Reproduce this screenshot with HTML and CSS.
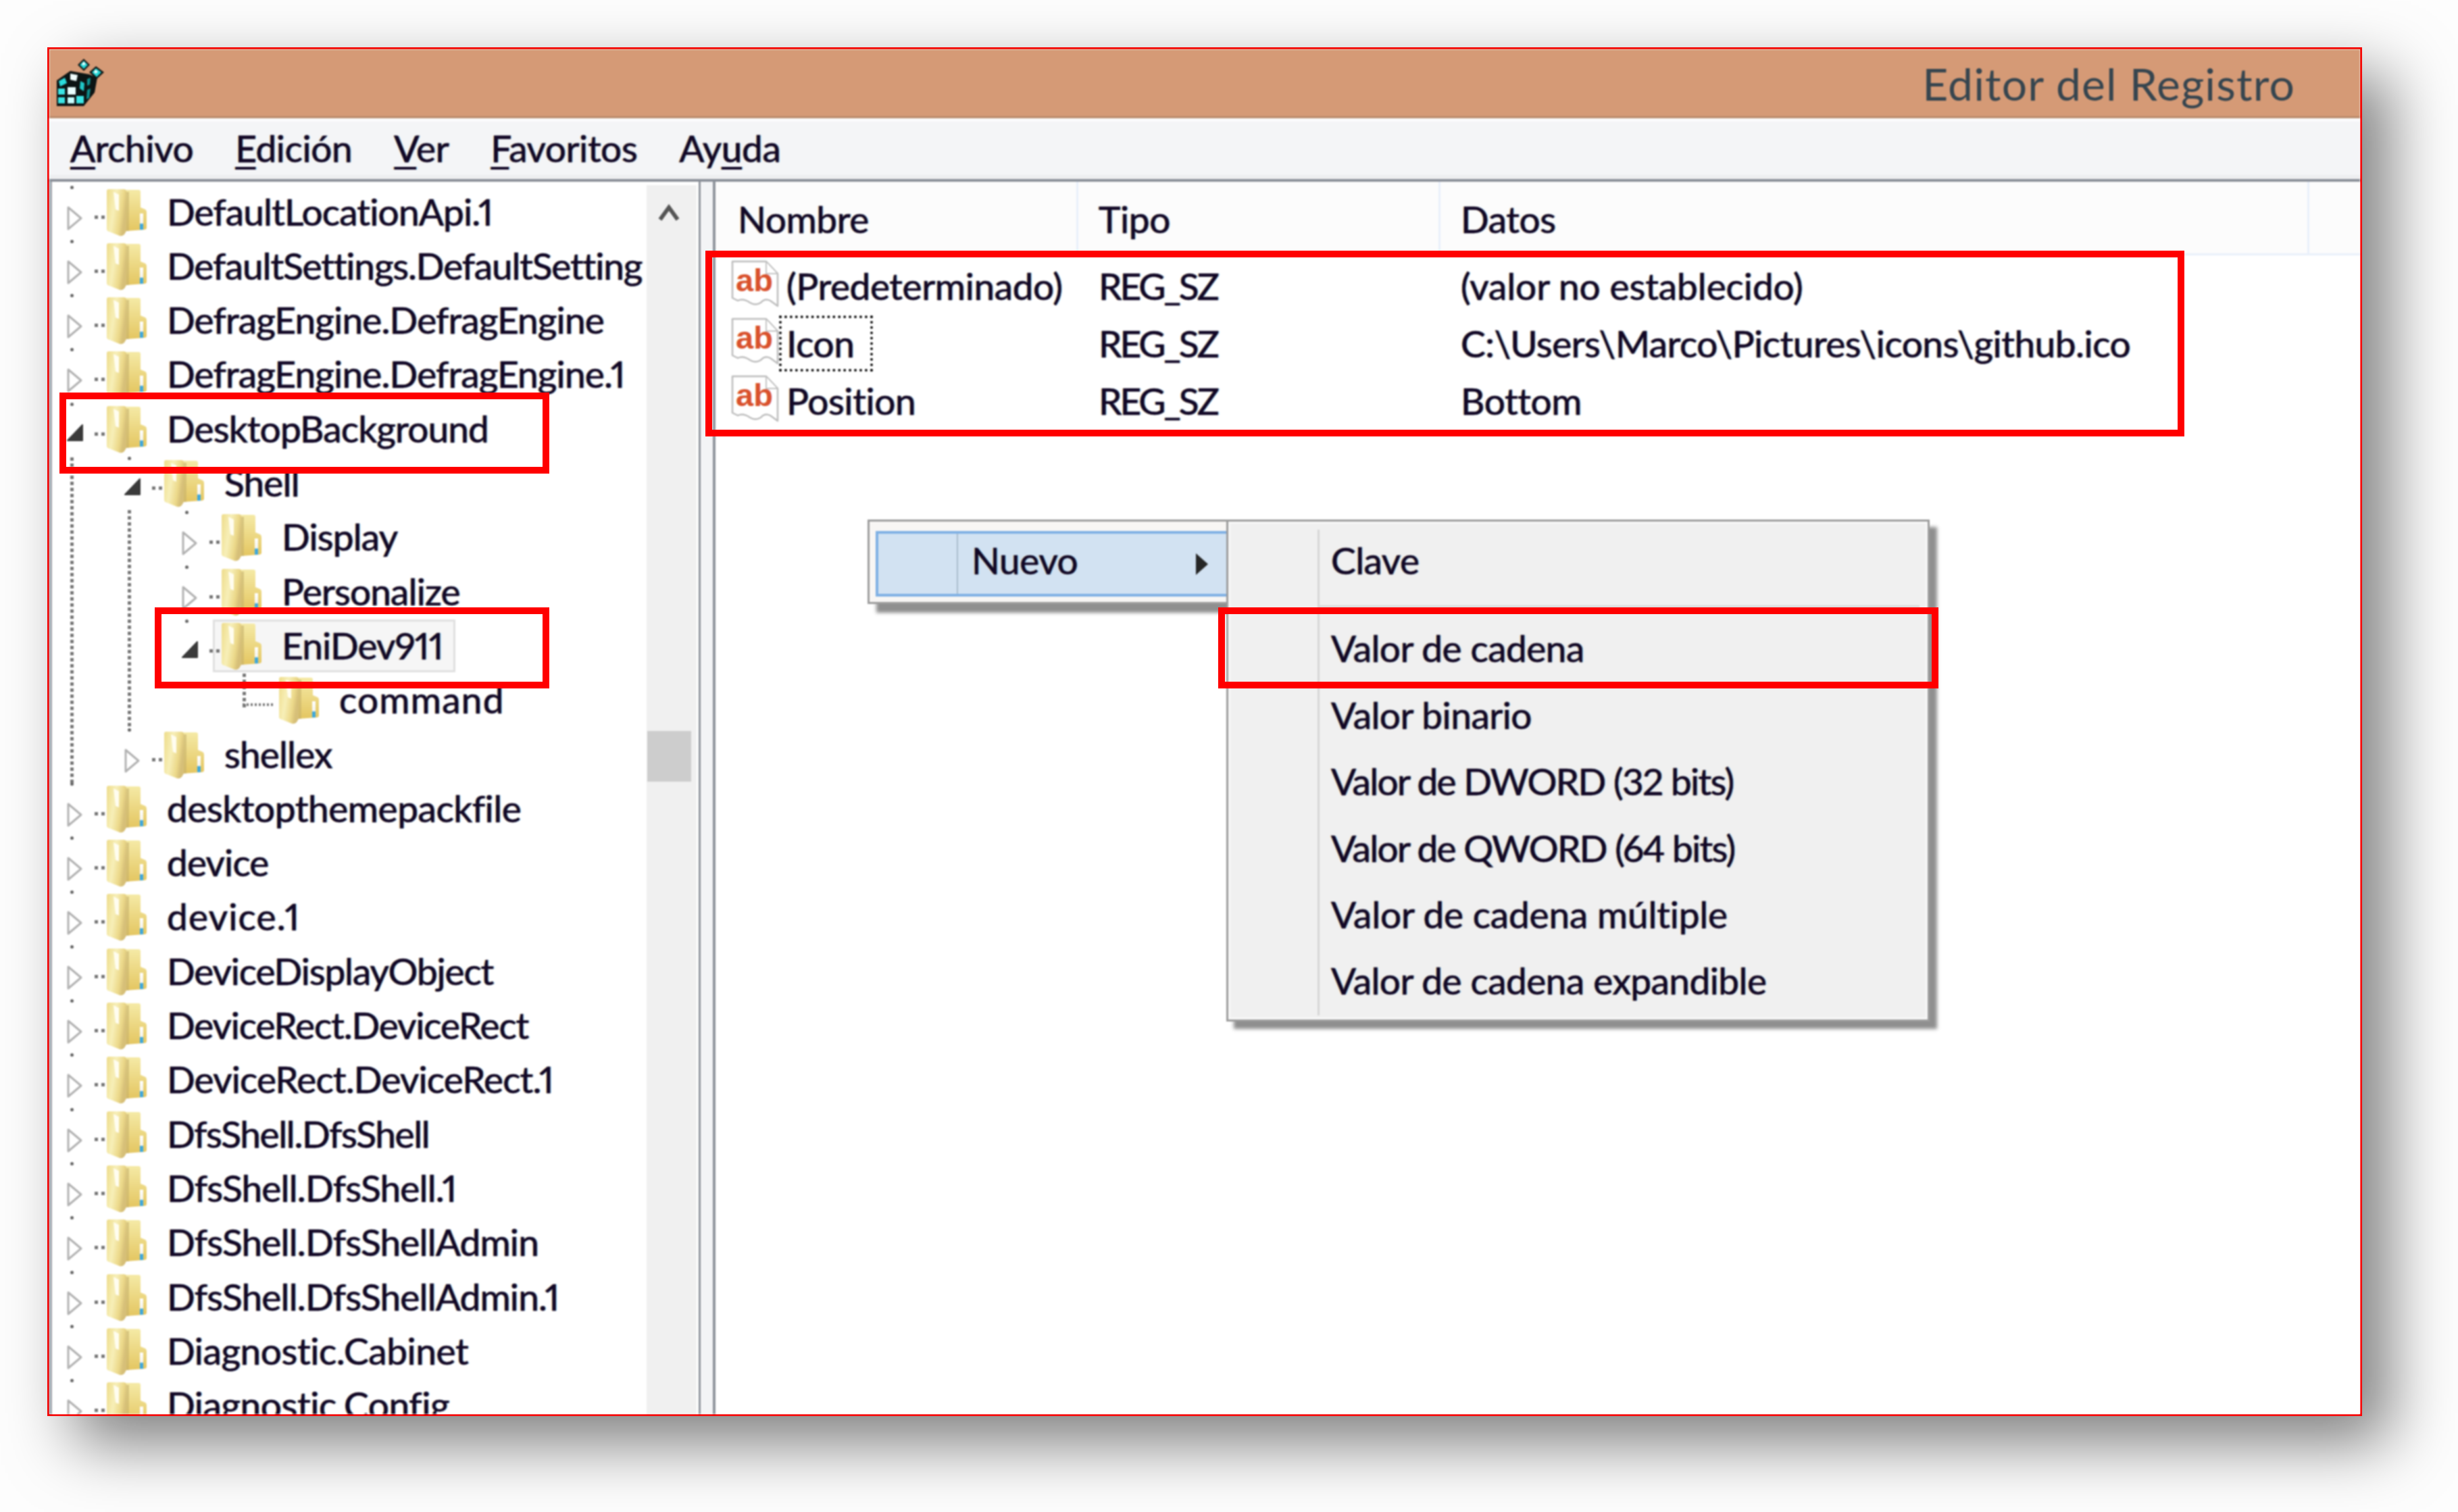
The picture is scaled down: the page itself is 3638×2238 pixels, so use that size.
FILE: index.html
```html
<!DOCTYPE html>
<html lang="es">
<head>
<meta charset="utf-8">
<title>Editor del Registro</title>
<link rel="stylesheet" href="styles.css">
</head>
<body>
<svg class="defs" aria-hidden="true">
  <defs>
    <linearGradient id="fb" x1="0" y1="0" x2="0" y2="1"><stop offset="0" stop-color="#f5eaa6"/><stop offset="1" stop-color="#e4c661"/></linearGradient>
    <linearGradient id="ff" x1="0" y1="0" x2="1" y2="0.35"><stop offset="0" stop-color="#eedc8a"/><stop offset=".45" stop-color="#f7efb8"/><stop offset=".8" stop-color="#ecd98a"/><stop offset="1" stop-color="#d6bf78"/></linearGradient>
    <linearGradient id="fbar" x1="0" y1="0" x2="0" y2="1"><stop offset="0" stop-color="#fff"/><stop offset=".6" stop-color="#f4f4ee"/><stop offset=".65" stop-color="#3fa8dc"/><stop offset="1" stop-color="#3fa8dc"/></linearGradient>
    <symbol id="folder" viewBox="0 0 59 70">
      <path d="M24 1H47Q50 1 50 4V27L57 30Q59 31 59 34V57Q59 60 55 60L28 62Z" fill="url(#fb)"/>
      <path d="M29 4H33V62H28Z" fill="#c6b06a" opacity=".6"/>
      <path d="M3 0H25Q29 0 29 4V62L26 67Q23 70 19 69L4 63Q0 62 0 59V3Q0 0 3 0Z" fill="url(#ff)"/>
      <path d="M10 4L18 8V32L13 30Z" fill="#fffdf0"/>
      <rect x="49" y="36" width="5" height="24" fill="url(#fbar)"/>
    </symbol>
    <symbol id="closed" viewBox="0 0 26 38"><path d="M3 3L22 19L3 35Z" fill="#fff" stroke="#b2b2b2" stroke-width="3" stroke-linejoin="round"/></symbol>
    <symbol id="open" viewBox="0 0 26 38"><path d="M24 4V27H2Z" fill="#3a3a3a" stroke="#3a3a3a" stroke-width="2" stroke-linejoin="round"/></symbol>
    <symbol id="ab" viewBox="0 0 71 72">
      <path d="M2 2H52L69 20V68L58 60Q50 56 44 63Q36 68 28 63Q18 56 10 60L2 56Z" fill="#fff" stroke="#bdbdbd" stroke-width="2.5" stroke-linejoin="round"/>
      <path d="M52 3V20H68" fill="#fff" stroke="#c4c4c4" stroke-width="2"/>
    </symbol>
  </defs>
</svg>

<main class="window">
  <div class="content">
    <header class="titlebar">
      <svg class="regicon" viewBox="0 0 72 71" aria-hidden="true">
        <path d="M2 32L22 18L50 23L62 28L58 50L42 70H2Z" fill="#0c1414"/>
        <path d="M42 0L51 9L42 18L33 9Z" fill="#0c1414"/><path d="M42 3L48 9L42 15L36 9Z" fill="#23d6d6"/><path d="M42 4L45 8L41 10L39 8Z" fill="#e9ffff"/>
        <path d="M60 11L72 20L61 30L50 20Z" fill="#0c1414"/><path d="M60 14L68 20L61 27L54 20Z" fill="#23d6d6"/><path d="M59 16L63 19L60 22L57 20Z" fill="#e9ffff"/>
        <path d="M5 33L14 28L17 36L7 41Z" fill="#2bdcdc"/><path d="M22 22L33 24L31 33L22 31Z" fill="#f2ffff"/>
        <path d="M37 33L43 36L42 48L36 44Z" fill="#20c8c8"/><path d="M47 30L52 28L51 38L47 40Z" fill="#0e8f8f"/><path d="M47 46L52 44L50 58L46 60Z" fill="#0e8f8f"/>
        <rect x="4" y="44" width="10" height="9" fill="#3be4e4"/><rect x="18" y="42" width="12" height="11" fill="#eaffff"/>
        <rect x="4" y="57" width="10" height="9" fill="#3be4e4"/><rect x="18" y="57" width="10" height="9" fill="#c8ffff"/><rect x="31" y="55" width="11" height="11" fill="#3be4e4"/>
      </svg>
      <h1 class="title">Editor del Registro</h1>
    </header>
    <nav class="menubar">
      <span><u>A</u>rchivo</span>
      <span><u>E</u>dición</span>
      <span><u>V</u>er</span>
      <span><u>F</u>avoritos</span>
      <span>Ay<u>u</u>da</span>
    </nav>
    <div class="panes">
      <section class="tree">
        <div class="rows">
          <i class="vline v-root"></i>
          <i class="vline v-shell"></i>
          <i class="vline v-eni"></i>
          <i class="hline"></i>
          <div class="row l0"><svg class="caret"><use href="#closed"/></svg><i class="dots"></i><div class="node"><svg class="folder"><use href="#folder"/></svg><span class="label">DefaultLocationApi.1</span></div></div>
          <div class="row l0"><svg class="caret"><use href="#closed"/></svg><i class="dots"></i><div class="node"><svg class="folder"><use href="#folder"/></svg><span class="label tight">DefaultSettings.DefaultSetting</span></div></div>
          <div class="row l0"><svg class="caret"><use href="#closed"/></svg><i class="dots"></i><div class="node"><svg class="folder"><use href="#folder"/></svg><span class="label">DefragEngine.DefragEngine</span></div></div>
          <div class="row l0"><svg class="caret"><use href="#closed"/></svg><i class="dots"></i><div class="node"><svg class="folder"><use href="#folder"/></svg><span class="label">DefragEngine.DefragEngine.1</span></div></div>
          <div class="row l0"><svg class="caret"><use href="#open"/></svg><i class="dots"></i><div class="node"><svg class="folder"><use href="#folder"/></svg><span class="label">DesktopBackground</span></div></div>
          <div class="row l1"><svg class="caret"><use href="#open"/></svg><i class="dots"></i><div class="node"><svg class="folder"><use href="#folder"/></svg><span class="label">Shell</span></div></div>
          <div class="row l2"><svg class="caret"><use href="#closed"/></svg><i class="dots"></i><div class="node"><svg class="folder"><use href="#folder"/></svg><span class="label">Display</span></div></div>
          <div class="row l2"><svg class="caret"><use href="#closed"/></svg><i class="dots"></i><div class="node"><svg class="folder"><use href="#folder"/></svg><span class="label">Personalize</span></div></div>
          <div class="row l2"><svg class="caret"><use href="#open"/></svg><i class="dots"></i><div class="node selected"><svg class="folder"><use href="#folder"/></svg><span class="label">EniDev911</span></div></div>
          <div class="row l3 leaf"><i class="caret"></i><i class="dots blank"></i><div class="node"><svg class="folder"><use href="#folder"/></svg><span class="label wide">command</span></div></div>
          <div class="row l1"><svg class="caret"><use href="#closed"/></svg><i class="dots"></i><div class="node"><svg class="folder"><use href="#folder"/></svg><span class="label">shellex</span></div></div>
          <div class="row l0"><svg class="caret"><use href="#closed"/></svg><i class="dots"></i><div class="node"><svg class="folder"><use href="#folder"/></svg><span class="label loose">desktopthemepackfile</span></div></div>
          <div class="row l0"><svg class="caret"><use href="#closed"/></svg><i class="dots"></i><div class="node"><svg class="folder"><use href="#folder"/></svg><span class="label">device</span></div></div>
          <div class="row l0"><svg class="caret"><use href="#closed"/></svg><i class="dots"></i><div class="node"><svg class="folder"><use href="#folder"/></svg><span class="label wide">device.1</span></div></div>
          <div class="row l0"><svg class="caret"><use href="#closed"/></svg><i class="dots"></i><div class="node"><svg class="folder"><use href="#folder"/></svg><span class="label tight">DeviceDisplayObject</span></div></div>
          <div class="row l0"><svg class="caret"><use href="#closed"/></svg><i class="dots"></i><div class="node"><svg class="folder"><use href="#folder"/></svg><span class="label tight">DeviceRect.DeviceRect</span></div></div>
          <div class="row l0"><svg class="caret"><use href="#closed"/></svg><i class="dots"></i><div class="node"><svg class="folder"><use href="#folder"/></svg><span class="label">DeviceRect.DeviceRect.1</span></div></div>
          <div class="row l0"><svg class="caret"><use href="#closed"/></svg><i class="dots"></i><div class="node"><svg class="folder"><use href="#folder"/></svg><span class="label tighter">DfsShell.DfsShell</span></div></div>
          <div class="row l0"><svg class="caret"><use href="#closed"/></svg><i class="dots"></i><div class="node"><svg class="folder"><use href="#folder"/></svg><span class="label">DfsShell.DfsShell.1</span></div></div>
          <div class="row l0"><svg class="caret"><use href="#closed"/></svg><i class="dots"></i><div class="node"><svg class="folder"><use href="#folder"/></svg><span class="label">DfsShell.DfsShellAdmin</span></div></div>
          <div class="row l0"><svg class="caret"><use href="#closed"/></svg><i class="dots"></i><div class="node"><svg class="folder"><use href="#folder"/></svg><span class="label">DfsShell.DfsShellAdmin.1</span></div></div>
          <div class="row l0"><svg class="caret"><use href="#closed"/></svg><i class="dots"></i><div class="node"><svg class="folder"><use href="#folder"/></svg><span class="label loose">Diagnostic.Cabinet</span></div></div>
          <div class="row l0"><svg class="caret"><use href="#closed"/></svg><i class="dots"></i><div class="node"><svg class="folder"><use href="#folder"/></svg><span class="label loose">Diagnostic.Config</span></div></div>
        </div>
        <div class="scrollbar">
          <svg class="chev" viewBox="0 0 32 27" aria-hidden="true"><path d="M3 24L16 6L29 24" fill="none" stroke="#555" stroke-width="6"/></svg>
          <div class="thumb"></div>
        </div>
      </section>
      <div class="splitter"></div>
      <section class="list">
        <div class="head">
          <div class="hcell c-name">Nombre</div>
          <div class="hcell c-type">Tipo</div>
          <div class="hcell c-data">Datos</div>
        </div>
        <div class="lrow">
          <div class="c-name namecell"><span class="abicon"><svg class="abpage"><use href="#ab"/></svg><b class="abtext">ab</b></span><span class="vname">(Predeterminado)</span></div>
          <div class="c-type">REG_SZ</div>
          <div class="c-data relaxed">(valor no establecido)</div>
        </div>
        <div class="lrow">
          <div class="c-name namecell"><span class="abicon"><svg class="abpage"><use href="#ab"/></svg><b class="abtext">ab</b></span><span class="vname focus">Icon</span></div>
          <div class="c-type">REG_SZ</div>
          <div class="c-data condensed">C:\Users\Marco\Pictures\icons\github.ico</div>
        </div>
        <div class="lrow">
          <div class="c-name namecell"><span class="abicon"><svg class="abpage"><use href="#ab"/></svg><b class="abtext">ab</b></span><span class="vname">Position</span></div>
          <div class="c-type">REG_SZ</div>
          <div class="c-data">Bottom</div>
        </div>
      </section>
    </div>
    <div class="popup">
      <div class="hover">
        <span class="pgutter"></span>
        <span class="ptext">Nuevo</span>
        <svg class="arrow" viewBox="0 0 19 32" aria-hidden="true"><path d="M1 0L19 16L1 32Z" fill="#262626"/></svg>
      </div>
    </div>
    <div class="submenu">
      <div class="item">Clave</div>
      <div class="msep"></div>
      <div class="item">Valor de cadena</div>
      <div class="item">Valor binario</div>
      <div class="item caps">Valor de DWORD (32 bits)</div>
      <div class="item caps">Valor de QWORD (64 bits)</div>
      <div class="item open-text">Valor de cadena múltiple</div>
      <div class="item">Valor de cadena expandible</div>
    </div>
  </div>
  <i class="mark mark-desktop"></i>
  <i class="mark mark-eni"></i>
  <i class="mark mark-values"></i>
  <i class="mark mark-cadena"></i>
</main>
</body>
</html>
```
FILE: styles.css
```css
* { box-sizing: border-box; }
html, body { margin: 0; height: 100%; }
body {
  background: #fdfdfd;
  padding: 70px 0 0 70px;
  overflow: hidden;
  font-family: "Lato", "Open Sans", sans-serif;
  font-size: 55px;
  font-variant-numeric: proportional-nums;
  color: #120726;
  -webkit-text-stroke: .5px #120726;
  text-shadow: -1.5px 0 1px rgba(255, 170, 40, .5), 1.5px 0 1px rgba(30, 170, 255, .5);
}
.defs { position: absolute; width: 0; height: 0; }

.window {
  position: relative;
  width: 3426px;
  height: 2026px;
  border: 3px solid #f70000;
  background: #fff;
  box-shadow: 40px 40px 90px rgba(0, 0, 0, .5);
}
.content {
  position: relative;
  height: 100%;
  display: flex;
  flex-direction: column;
  overflow: hidden;
  filter: blur(.9px);
}

.titlebar {
  flex: none;
  height: 102px;
  display: flex;
  align-items: flex-start;
  justify-content: space-between;
  background: #d59a76;
  border-bottom: 3px solid #b98a6a;
  padding: 14px 96px 0 9px;
}
.regicon { width: 72px; height: 71px; flex: none; }
.title {
  margin: -2px 0 0;
  font-size: 66px;
  font-weight: 400;
  line-height: 78px;
  letter-spacing: 1.1px;
  color: #36454f;
  -webkit-text-stroke: 0;
  text-shadow: none;
}

.menubar {
  flex: none;
  height: 90px;
  display: flex;
  gap: 62px;
  padding: 4px 0 0 31px;
  line-height: 70px;
  letter-spacing: -.4px;
  background: #f4f5f7;
  border-top: 5px solid #fbfbfc;
  border-bottom: 6px solid #eeeff0;
}
.menubar u { text-decoration-thickness: 4px; text-underline-offset: 7px; }

.panes {
  flex: 1;
  min-height: 0;
  display: flex;
  border-top: 4px solid #8b9099;
}

.tree {
  flex: none;
  width: 964px;
  display: flex;
  background: #fff;
  border-left: 4px solid #a3a8b0;
  border-right: 3px solid #8f949c;
}
.rows {
  position: relative;
  flex: 1;
  min-width: 0;
  padding-top: 5.6px;
  overflow: hidden;
  letter-spacing: -.85px;
}
.row {
  position: relative;
  height: 80.3px;
  display: flex;
  align-items: flex-start;
  white-space: nowrap;
}
.row::before {
  content: "";
  position: absolute;
  top: 0;
  width: 5px;
  height: 5px;
  border-radius: 50%;
  background: #666;
}
.leaf::before { display: none; }
.l0 { padding-left: 21px; }
.l1 { padding-left: 106px; }
.l2 { padding-left: 191px; }
.l3 { padding-left: 276px; }
.l0::before { left: 27px; }
.l1::before { left: 112px; }
.l2::before { left: 197px; }
.caret {
  flex: none;
  display: block;
  width: 26px;
  height: 38px;
  margin-top: 29px;
}
.dots {
  flex: none;
  position: relative;
  z-index: 1;
  width: 15px;
  height: 5px;
  margin: 44px 3px 0 16px;
  background: repeating-linear-gradient(90deg, #777 0 5px, transparent 5px 10px);
}
.dots.blank { background: none; }
.node {
  display: flex;
  align-items: flex-start;
  height: 78px;
}
.folder {
  flex: none;
  display: block;
  width: 59px;
  height: 70px;
  margin: 5px 30px 0 0;
}
.label { line-height: 70px; margin-top: 3px; }
.label.tight { letter-spacing: -1.15px; }
.label.tighter { letter-spacing: -1.4px; }
.label.loose { letter-spacing: -.45px; }
.label.wide { letter-spacing: 1.2px; }
.selected {
  margin-left: -13px;
  width: 359px;
  padding: 0 0 0 10px;
  background: #f6f6f6;
  border: 3px solid #e0e0e0;
}
.selected .folder { margin-top: 2px; }
.selected .label { margin-top: 0; }

.vline {
  position: absolute;
  width: 5px;
  background: repeating-linear-gradient(180deg, #777 0 5px, transparent 5px 9px);
}
.v-root { left: 27px; top: 408px; height: 484px; }
.v-shell { left: 112px; top: 486px; height: 326px; }
.v-eni { left: 282px; top: 728px; height: 50px; }
.hline {
  position: absolute;
  left: 282px;
  top: 772px;
  width: 48px;
  height: 4px;
  background: repeating-linear-gradient(90deg, #777 0 3px, transparent 3px 6px);
}

.scrollbar {
  flex: none;
  width: 74px;
  margin: 5px 3px 0 0;
  padding-top: 27px;
  background: #f0f0f0;
}
.chev { display: block; width: 32px; height: 27px; margin-left: 17px; }
.thumb {
  width: 65px;
  height: 75px;
  margin: 754px 0 0 1px;
  background: #cdcdcd;
}

.splitter { flex: none; width: 18px; background: #f3f4f6; }

.list {
  flex: 1;
  min-width: 0;
  background: #fff;
  border-left: 4px solid #8f949c;
  letter-spacing: -.4px;
}
.head {
  height: 109px;
  display: flex;
  background: #fcfcfc;
  border-bottom: 3px solid #e9f0fb;
}
.hcell {
  padding-top: 20px;
  line-height: 70px;
  border-right: 3px solid #e9f0fb;
}
.c-name { flex: none; width: 537px; }
.c-type { flex: none; width: 536px; }
.c-data { flex: none; width: 1286px; }
.hcell.c-name { padding-left: 33px; }
.hcell.c-type, .hcell.c-data { padding-left: 30px; }

.lrow {
  height: 85px;
  display: flex;
  align-items: flex-start;
  white-space: nowrap;
  line-height: 83px;
}
.head + .lrow { margin-top: 4px; }
.lrow .c-type { padding-left: 30px; letter-spacing: -3px; }
.lrow .c-data { padding-left: 30px; }
.lrow .relaxed { letter-spacing: -.1px; }
.lrow .condensed { letter-spacing: -.5px; }
.namecell { display: flex; padding-left: 23px; }
.abicon {
  position: relative;
  flex: none;
  width: 71px;
  height: 72px;
  margin-top: 3px;
}
.abpage { display: block; width: 71px; height: 72px; }
.abtext {
  position: absolute;
  left: 7px;
  top: 8px;
  font: 700 47px/43px "Liberation Sans", sans-serif;
  letter-spacing: 0;
  color: #d9512c;
  -webkit-text-stroke: 0;
  text-shadow: none;
}
.vname { padding: 0 11px; height: 83px; }
.focus {
  width: 139px;
  outline: 4px dotted #111;
  outline-offset: -4px;
}

.popup {
  position: absolute;
  left: 1211px;
  top: 696px;
  width: 531px;
  height: 125px;
  padding: 14px 0 0 9px;
  background: #f8f6f4;
  border: 3px solid #9c9c9c;
  border-right: 0;
  box-shadow: 13px 13px 5px #8f8f8f;
}
.hover {
  height: 97px;
  display: flex;
  align-items: center;
  background: #d2e2f2;
  border: 4px solid #7fb0e4;
  border-right: 0;
}
.pgutter {
  flex: none;
  width: 118px;
  align-self: stretch;
  border-right: 2px solid #a9bccd;
}
.ptext { padding-left: 20px; line-height: 79px; align-self: flex-start; margin-top: 0; letter-spacing: -.4px; }
.arrow { flex: none; width: 19px; height: 32px; margin-left: auto; margin-right: 27px; }

.submenu {
  position: absolute;
  left: 1742px;
  top: 696px;
  width: 1041px;
  height: 743px;
  padding-top: 11px;
  background: #f0f0f0;
  border: 3px solid #9c9c9c;
  letter-spacing: -.55px;
  box-shadow: 11px 11px 5px #8f8f8f, inset 0 0 0 3px #f8f8f8;
}
.submenu::before {
  content: "";
  position: absolute;
  left: 132px;
  top: 12px;
  bottom: 6px;
  width: 3px;
  background: #d6d6d6;
}
.item {
  height: 98.4px;
  padding-left: 152px;
  line-height: 92px;
}
.item.caps { letter-spacing: -1.7px; }
.item.open-text { letter-spacing: -.2px; }
.msep {
  height: 3px;
  margin: 15px 12px 14px 132px;
  background: #d8d8d8;
}

.mark {
  position: absolute;
  border: 10px solid #ff0000;
}
.mark-desktop { left: 15px; top: 508px; width: 725px; height: 120px; }
.mark-eni { left: 156px; top: 826px; width: 584px; height: 120px; }
.mark-values { left: 971px; top: 298px; width: 2189px; height: 275px; }
.mark-cadena { left: 1730px; top: 826px; width: 1066px; height: 120px; }
```
